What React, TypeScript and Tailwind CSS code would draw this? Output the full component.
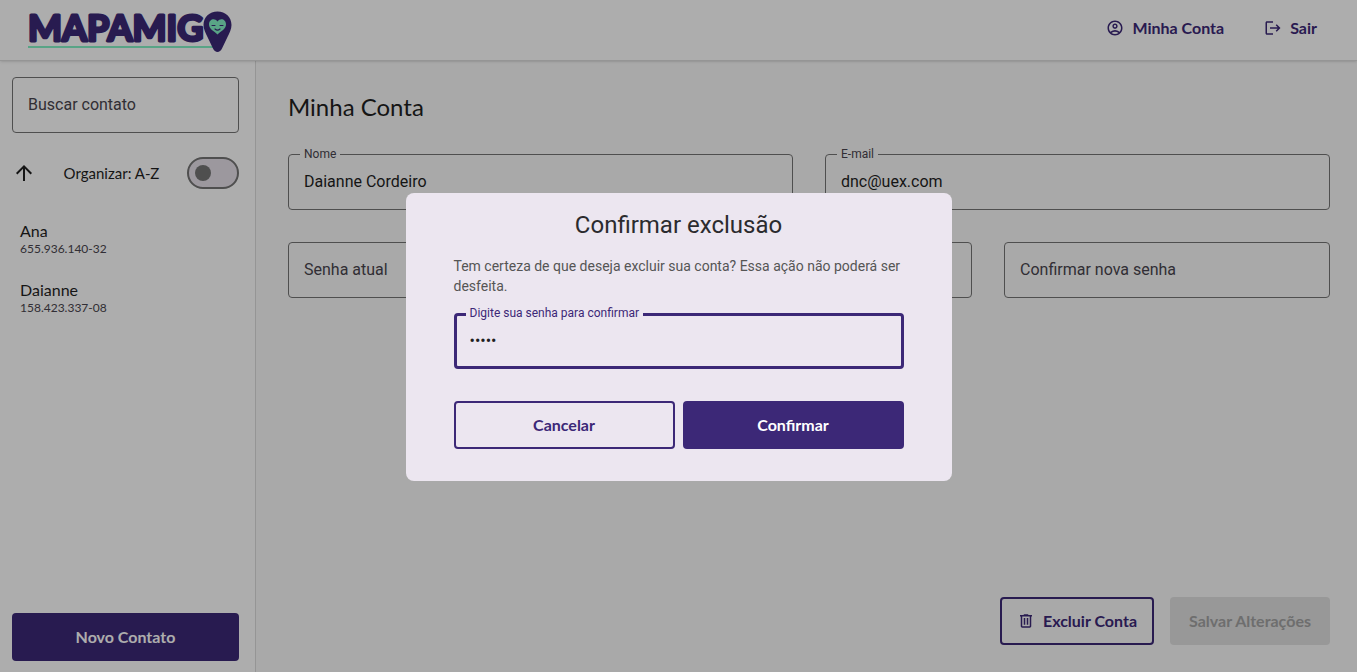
import { useState } from 'react';
import { MdArrowUpward, MdLogout, MdOutlineAccountCircle } from 'react-icons/md';

const contacts = [
  { name: 'Ana', document: '655.936.140-32' },
  { name: 'Daianne', document: '158.423.337-08' },
];

function Logo() {
  return (
    <svg width="206" height="44" viewBox="0 0 206 44" role="img" aria-label="Mapamigo" className="overflow-visible">
      <rect x="0" y="38" width="188" height="2" fill="#84f2c6" />
      <text
        x="0"
        y="33"
        className="font-['Lato',sans-serif] text-[36px] font-bold"
        fill="#3c2877"
        stroke="#3c2877"
        strokeWidth="3"
        strokeLinejoin="round"
      >
        MAPAMIG
      </text>
      <path
        d="M189.500 3.500C181.500 3.500 175.500 9.200 175.500 17C175.500 21 177.500 25 179.500 29L185 40.500C187 45 192 45 194 40.500L199.500 29C201.500 25 203.500 21 203.500 17C203.500 9.200 197.500 3.500 189.500 3.500Z"
        fill="#3c2877"
      />
      <path
        d="M189.500 13.500C186.500 9.500 181 11.500 181 16.500C181 21 186 23 189.500 26.500C193 23 198 21 198 16.500C198 11.500 192.500 9.500 189.500 13.500Z"
        fill="#84f2c6"
      />
      <path
        d="M184 17.500H187M192 17.500H195M187 21Q189.500 23.400 192 21"
        fill="none"
        stroke="#3c2877"
        strokeWidth="1.100"
        strokeLinecap="round"
      />
    </svg>
  );
}

function TrashIcon() {
  return (
    <svg width="18" height="18" viewBox="0 0 24 24" fill="currentColor" aria-hidden="true">
      <path d="M7 21q-.825 0-1.412-.587T5 19V6H4V4h5V3h6v1h5v2h-1v13q0 .825-.587 1.413T17 21zM17 6H7v13h10zM9 17h2V8H9zm4 0h2V8h-2z" />
    </svg>
  );
}

type FieldProps = { id: string; label: string; value?: string; type?: string; hideLabel?: boolean };

const floatingLabel =
  'pointer-events-none absolute -top-[9px] left-[11px] bg-[#fafafa] px-1 text-xs leading-4 text-[#49454e] peer-placeholder-shown:top-[15px] peer-placeholder-shown:bg-transparent peer-placeholder-shown:text-base peer-placeholder-shown:leading-6';

function Field({ id, label, value, type = 'text', hideLabel = false }: FieldProps) {
  const [text, setText] = useState(value ?? '');
  return (
    <div className="relative h-14 w-full rounded border border-[#757575]">
      <input
        id={id}
        type={type}
        value={text}
        placeholder=" "
        onChange={(event) => setText(event.target.value)}
        className="peer h-full w-full bg-transparent px-[15px] pb-0.5 text-base text-[#1f1f1f] outline-none"
      />
      <label htmlFor={id} className={hideLabel ? 'sr-only' : floatingLabel}>
        {label}
      </label>
    </div>
  );
}

function Header() {
  return (
    <header className="z-10 flex h-[61px] shrink-0 items-center justify-between border-b border-[#dcdcdc] bg-white pr-10 pl-7 shadow-sm">
      <Logo />
      <nav className="flex items-center gap-10 pb-1 font-['Lato',sans-serif] text-base font-bold text-[#3c2877]">
        <a href="#conta" className="flex items-center gap-2">
          <MdOutlineAccountCircle size={18} />
          Minha Conta
        </a>
        <a href="#sair" className="flex items-center gap-2">
          <MdLogout size={18} />
          Sair
        </a>
      </nav>
    </header>
  );
}

function Sidebar() {
  return (
    <aside className="flex w-64 shrink-0 flex-col border-r border-[#dcdcdc] bg-white pt-4 pr-4 pb-[11px] pl-3">
      <Field id="busca" label="Buscar contato" />
      <div className="mt-6 flex h-8 items-center justify-between">
        <button type="button" aria-label="Inverter ordem" className="text-[#1f1f1f]">
          <MdArrowUpward size={24} />
        </button>
        <label htmlFor="ordem" className="font-['Lato',sans-serif] text-[15px] text-[#1f1f1f]">
          Organizar: A-Z
        </label>
        <span className="relative flex">
          <input
            id="ordem"
            type="checkbox"
            role="switch"
            className="peer h-8 w-[52px] appearance-none rounded-full border-2 border-[#757575] bg-[#e6e0e9]"
          />
          <span className="pointer-events-none absolute top-2 left-2 size-4 rounded-full bg-[#757575] peer-checked:left-7" />
        </span>
      </div>
      <ul className="mt-8 flex flex-col gap-[23px] pl-2 font-['Lato',sans-serif]">
        {contacts.map((contact) => (
          <li key={contact.document}>
            <p className="text-base leading-5 text-[#1f1f1f]">{contact.name}</p>
            <p className="text-xs leading-4 text-[#49454e]">{contact.document}</p>
          </li>
        ))}
      </ul>
      <button
        type="button"
        className="mt-auto h-12 rounded bg-[#3c2877] font-['Lato',sans-serif] text-base font-bold text-white"
      >
        Novo Contato
      </button>
    </aside>
  );
}

function Account() {
  return (
    <main className="flex grow flex-col bg-[#fafafa] pt-8 pr-[27px] pb-[27px] pl-8">
      <h1 className="font-['Lato',sans-serif] text-2xl leading-7 text-[#1f1f1f]">Minha Conta</h1>
      <form className="mt-[33px] flex grow flex-col gap-8">
        <div className="grid grid-cols-2 gap-8">
          <Field id="nome" label="Nome" value="Daianne Cordeiro" />
          <Field id="email" label="E-mail" value="dnc@uex.com" type="email" />
        </div>
        <div className="grid grid-cols-3 gap-8">
          <Field id="senha-atual" label="Senha atual" type="password" />
          <Field id="nova-senha" label="Nova senha" type="password" hideLabel />
          <Field id="confirmar-senha" label="Confirmar nova senha" type="password" />
        </div>
        <div className="mt-auto flex justify-end gap-4 font-['Lato',sans-serif] text-base font-bold">
          <button
            type="button"
            className="flex h-12 min-w-[154px] items-center justify-center gap-2 rounded border-2 border-[#3c2877] px-3.5 text-[#3c2877]"
          >
            <TrashIcon />
            Excluir Conta
          </button>
          <button type="submit" disabled className="h-12 min-w-40 rounded bg-[#e0e0e0] px-4 text-[#a3a3a3]">
            Salvar Alterações
          </button>
        </div>
      </form>
    </main>
  );
}

function ConfirmDialog() {
  const [password, setPassword] = useState('12345');
  return (
    <div className="fixed inset-0 z-20 flex items-center justify-center bg-black/32 pt-0.5">
      <section
        role="dialog"
        aria-modal="true"
        aria-labelledby="dialogo-titulo"
        className="w-[546px] rounded-lg bg-[#ece6f0] px-12 pt-4 pb-8"
      >
        <h2 id="dialogo-titulo" className="text-center text-2xl leading-8 text-[#2b2b2e]">
          Confirmar exclusão
        </h2>
        <p className="mt-[15px] text-sm leading-5 text-[#555555]">
          Tem certeza de que deseja excluir sua conta? Essa ação não poderá ser desfeita.
        </p>
        <div className="relative mt-[17px] h-14 rounded border-3 border-[#3c2877]">
          <input
            id="senha"
            type="password"
            value={password}
            onChange={(event) => setPassword(event.target.value)}
            className="h-full w-full bg-transparent px-[13px] pb-0.5 text-base text-[#1f1f1f] outline-none"
          />
          <label
            htmlFor="senha"
            className="absolute -top-[11px] left-[9px] bg-[#ece6f0] px-1 text-xs leading-4 text-[#3c2877]"
          >
            Digite sua senha para confirmar
          </label>
        </div>
        <div className="mt-8 grid grid-cols-2 gap-2 font-['Lato',sans-serif] text-base font-bold">
          <button type="button" className="h-12 rounded border-2 border-[#3c2877] text-[#3c2877]">
            Cancelar
          </button>
          <button type="button" className="h-12 rounded bg-[#3c2877] text-white">
            Confirmar
          </button>
        </div>
      </section>
    </div>
  );
}

export default function App() {
  return (
    <div className="flex h-screen flex-col font-['Roboto',sans-serif]">
      <Header />
      <div className="flex min-h-0 grow">
        <Sidebar />
        <Account />
      </div>
      <ConfirmDialog />
    </div>
  );
}
